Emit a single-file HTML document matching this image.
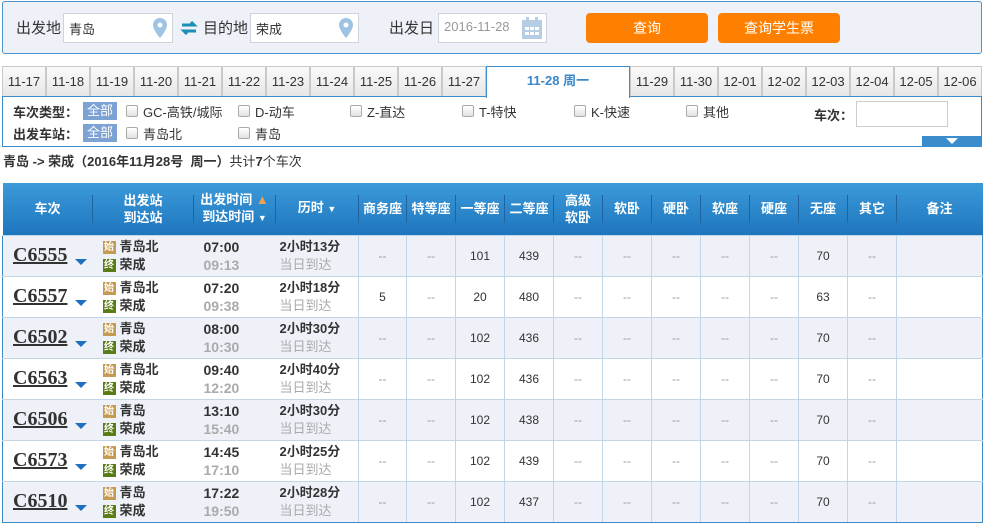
<!DOCTYPE html>
<html><head><meta charset="utf-8"><style>
*{margin:0;padding:0;box-sizing:border-box}
body{width:985px;height:530px;background:#fff;font-family:"Liberation Sans","Noto Sans CJK SC",sans-serif;font-size:13px;color:#333;position:relative;overflow:hidden}
.a{position:absolute}
.top{left:2px;top:1px;width:980px;height:53px;background:#eef1f8;border:1px solid #4b93cc;border-radius:3px}
.lbl{font-size:15px;color:#333;top:17px}
.inp{background:#fff;border:1px solid #cfd4dc;height:30px;top:13px;font-size:13px;padding:5px 0 0 5px}
.pin{position:absolute;right:5px;top:4px;width:14px;height:20px}
.btn{background:#ff8000;color:#fff;font-size:14px;text-align:center;line-height:30px;border-radius:4px;top:13px;width:122px;height:30px}
.tab{top:66px;height:31px;width:44px;background:linear-gradient(#fafafa,#e6e6e6);border:1px solid #c9c9c9;border-bottom:none;font-size:13px;text-align:center;line-height:30px;color:#333}
.filter{left:2px;top:96px;width:980px;height:51px;border:1px solid #3f8bc8;border-top:1px solid #3f8bc8}
.fl{font-weight:bold;font-size:13px}
.all{background:#7ca1d3;color:#fff;padding:0 4px;font-size:13px;line-height:18px;height:18px}
.cb{width:12px;height:12px;border:1px solid #aaa;border-radius:2px;background:linear-gradient(#fff,#e2e2e2)}
.ft{font-size:13px}
table{position:absolute;left:2px;top:183px;width:980px;border-collapse:collapse;table-layout:fixed}
th{height:52px;background:linear-gradient(#3c9ad9,#1e76be);color:#fff;font-size:13px;font-weight:bold;line-height:17px;position:relative}
th:after{content:"";position:absolute;right:0;top:12px;height:28px;border-right:1px solid #1f64a0}
th:last-child:after{display:none}
td{height:41px;border:1px solid #c3d6e6;text-align:center;font-size:12px;color:#333}
tr.o td{background:#eef1f8}
td.dd{color:#999}
td.tn{text-align:left;padding-left:10px;border-right:none;border-left:1px solid #3f8bc8}
td.st{text-align:left;padding-left:10px;border-left:none;border-right:none}
td.tm{border-left:none;border-right:none;text-align:left;padding-left:10px}
td.du{border-left:none;text-align:left;padding-left:4px}
td:last-child{border-right:1px solid #3f8bc8}
tr:last-child td{border-bottom:1px solid #3f8bc8}
.num{font-family:"Liberation Serif",serif;font-weight:bold;font-size:20px;color:#333;text-decoration:underline}
.arr{display:inline-block;width:0;height:0;border-left:6px solid transparent;border-right:6px solid transparent;border-top:6px solid #1f6fc0;margin-left:8px;vertical-align:-4px}
.ic{display:inline-block;width:13px;height:13px;font-size:10px;line-height:13px;text-align:center;color:#fff;vertical-align:1px;margin-right:4px}
.s{background:#c59a52}.e{background:#5a7c16}
.stn{font-weight:bold;font-size:13px;line-height:18px}
.t1{font-weight:bold;font-size:14px;line-height:18px;font-family:"Liberation Sans",sans-serif}
.t2{font-weight:bold;font-size:14px;line-height:18px;color:#aaa}
.d1{font-weight:bold;font-size:13px;line-height:18px}
.d2{color:#aaa;font-size:13px;line-height:18px}
</style></head><body>
<div class="a top"></div>
<div class="a lbl" style="left:16px">出发地</div>
<div class="a inp" style="left:63px;width:110px">青岛<svg class="pin" viewBox="0 0 14 20"><path d="M7 0C3 0 0 3 0 7c0 5 7 13 7 13s7-8 7-13C14 3 11 0 7 0z" fill="#9fc3e2"/><circle cx="7" cy="7" r="2.5" fill="#fff"/></svg></div>
<svg class="a" style="left:180px;top:21px" width="18" height="14" viewBox="0 0 18 14"><path d="M2 4h12l-3-3M16 10H4l3 3" stroke="#1a8fb8" stroke-width="3" fill="none"/></svg>
<div class="a lbl" style="left:203px">目的地</div>
<div class="a inp" style="left:250px;width:109px">荣成<svg class="pin" viewBox="0 0 14 20"><path d="M7 0C3 0 0 3 0 7c0 5 7 13 7 13s7-8 7-13C14 3 11 0 7 0z" fill="#9fc3e2"/><circle cx="7" cy="7" r="2.5" fill="#fff"/></svg></div>
<div class="a lbl" style="left:389px">出发日</div>
<div class="a inp" style="left:438px;width:109px;color:#999">2016-11-28<svg class="a" style="right:4px;top:3px" width="20" height="22" viewBox="0 0 20 22"><rect x="0" y="3" width="20" height="19" fill="#b5cde5"/><rect x="4" y="0" width="3" height="5" fill="#b5cde5"/><rect x="13" y="0" width="3" height="5" fill="#b5cde5"/><g fill="#fff"><rect x="3" y="10" width="4" height="3"/><rect x="8" y="10" width="4" height="3"/><rect x="13" y="10" width="4" height="3"/><rect x="3" y="15" width="4" height="3"/><rect x="8" y="15" width="4" height="3"/><rect x="13" y="15" width="4" height="3"/></g></svg></div>
<div class="a btn" style="left:586px">查询</div>
<div class="a btn" style="left:718px">查询学生票</div>

<div class="a tab" style="left:2px">11-17</div><div class="a tab" style="left:46px">11-18</div><div class="a tab" style="left:90px">11-19</div><div class="a tab" style="left:134px">11-20</div><div class="a tab" style="left:178px">11-21</div><div class="a tab" style="left:222px">11-22</div><div class="a tab" style="left:266px">11-23</div><div class="a tab" style="left:310px">11-24</div><div class="a tab" style="left:354px">11-25</div><div class="a tab" style="left:398px">11-26</div><div class="a tab" style="left:442px">11-27</div>
<div class="a" style="left:486px;top:66px;width:144px;height:31px;background:#fff;border:1px solid #3f8bc8;border-bottom:none;color:#3a86c8;font-weight:bold;text-align:center;line-height:28px;z-index:2">11-28 周一</div>
<div class="a tab" style="left:630px">11-29</div><div class="a tab" style="left:674px">11-30</div><div class="a tab" style="left:718px">12-01</div><div class="a tab" style="left:762px">12-02</div><div class="a tab" style="left:806px">12-03</div><div class="a tab" style="left:850px">12-04</div><div class="a tab" style="left:894px">12-05</div><div class="a tab" style="left:938px;width:44px">12-06</div>

<div class="a filter"></div>
<div class="a" style="left:486px;top:96px;width:144px;height:2px;background:#fff;z-index:3;border-left:1px solid #3f8bc8;border-right:1px solid #3f8bc8"></div>
<div class="a fl" style="left:13px;top:102px">车次类型：</div><div class="a all" style="left:83px;top:102px">全部</div>
<div class="a cb" style="left:126px;top:105px"></div><div class="a ft" style="left:143px;top:102px">GC-高铁/城际</div>
<div class="a cb" style="left:238px;top:105px"></div><div class="a ft" style="left:255px;top:102px">D-动车</div>
<div class="a cb" style="left:350px;top:105px"></div><div class="a ft" style="left:367px;top:102px">Z-直达</div>
<div class="a cb" style="left:462px;top:105px"></div><div class="a ft" style="left:479px;top:102px">T-特快</div>
<div class="a cb" style="left:574px;top:105px"></div><div class="a ft" style="left:591px;top:102px">K-快速</div>
<div class="a cb" style="left:686px;top:105px"></div><div class="a ft" style="left:703px;top:102px">其他</div>
<div class="a fl" style="left:814px;top:105px">车次：</div>
<div class="a" style="left:856px;top:101px;width:92px;height:26px;border:1px solid #ccc;background:#fff"></div>
<div class="a fl" style="left:13px;top:124px">出发车站：</div><div class="a all" style="left:83px;top:124px">全部</div>
<div class="a cb" style="left:126px;top:127px"></div><div class="a ft" style="left:143px;top:124px">青岛北</div>
<div class="a cb" style="left:238px;top:127px"></div><div class="a ft" style="left:255px;top:124px">青岛</div>
<div class="a" style="left:922px;top:136px;width:60px;height:11px;background:#3a8ccc"></div>
<div class="a" style="left:946px;top:138px;width:0;height:0;border-left:6px solid transparent;border-right:6px solid transparent;border-top:6px solid #fff"></div>

<div class="a" style="left:3px;top:151px;font-size:13px"><b>青岛 -&gt; 荣成（2016年11月28号&nbsp; 周一）</b>共计<b>7</b>个车次</div>

<table>
<colgroup><col style="width:90px"><col style="width:101px"><col style="width:82px"><col style="width:83px"><col style="width:48px"><col style="width:49px"><col style="width:49px"><col style="width:49px"><col style="width:49px"><col style="width:49px"><col style="width:49px"><col style="width:49px"><col style="width:49px"><col style="width:49px"><col style="width:49px"><col style="width:86px"></colgroup>
<tr><th>车次</th><th>出发站<br>到达站</th><th>出发时间 <span style="color:#f0a050">▲</span><br>到达时间 <span style="font-size:9px">▼</span></th><th>历时 <span style="font-size:9px">▼</span></th><th>商务座</th><th>特等座</th><th>一等座</th><th>二等座</th><th>高级<br>软卧</th><th>软卧</th><th>硬卧</th><th>软座</th><th>硬座</th><th>无座</th><th>其它</th><th>备注</th></tr>
<tr class="o"><td class="tn"><span class="num">C6555</span><span class="arr"></span></td><td class="st"><div class="stn"><span class="ic s">始</span>青岛北</div><div class="stn"><span class="ic e">终</span>荣成</div></td><td class="tm"><div class="t1">07:00</div><div class="t2">09:13</div></td><td class="du"><div class="d1">2小时13分</div><div class="d2">当日到达</div></td><td class="dd">--</td><td class="dd">--</td><td>101</td><td>439</td><td class="dd">--</td><td class="dd">--</td><td class="dd">--</td><td class="dd">--</td><td class="dd">--</td><td>70</td><td class="dd">--</td><td></td></tr>
<tr><td class="tn"><span class="num">C6557</span><span class="arr"></span></td><td class="st"><div class="stn"><span class="ic s">始</span>青岛北</div><div class="stn"><span class="ic e">终</span>荣成</div></td><td class="tm"><div class="t1">07:20</div><div class="t2">09:38</div></td><td class="du"><div class="d1">2小时18分</div><div class="d2">当日到达</div></td><td>5</td><td class="dd">--</td><td>20</td><td>480</td><td class="dd">--</td><td class="dd">--</td><td class="dd">--</td><td class="dd">--</td><td class="dd">--</td><td>63</td><td class="dd">--</td><td></td></tr>
<tr class="o"><td class="tn"><span class="num">C6502</span><span class="arr"></span></td><td class="st"><div class="stn"><span class="ic s">始</span>青岛</div><div class="stn"><span class="ic e">终</span>荣成</div></td><td class="tm"><div class="t1">08:00</div><div class="t2">10:30</div></td><td class="du"><div class="d1">2小时30分</div><div class="d2">当日到达</div></td><td class="dd">--</td><td class="dd">--</td><td>102</td><td>436</td><td class="dd">--</td><td class="dd">--</td><td class="dd">--</td><td class="dd">--</td><td class="dd">--</td><td>70</td><td class="dd">--</td><td></td></tr>
<tr><td class="tn"><span class="num">C6563</span><span class="arr"></span></td><td class="st"><div class="stn"><span class="ic s">始</span>青岛北</div><div class="stn"><span class="ic e">终</span>荣成</div></td><td class="tm"><div class="t1">09:40</div><div class="t2">12:20</div></td><td class="du"><div class="d1">2小时40分</div><div class="d2">当日到达</div></td><td class="dd">--</td><td class="dd">--</td><td>102</td><td>436</td><td class="dd">--</td><td class="dd">--</td><td class="dd">--</td><td class="dd">--</td><td class="dd">--</td><td>70</td><td class="dd">--</td><td></td></tr>
<tr class="o"><td class="tn"><span class="num">C6506</span><span class="arr"></span></td><td class="st"><div class="stn"><span class="ic s">始</span>青岛</div><div class="stn"><span class="ic e">终</span>荣成</div></td><td class="tm"><div class="t1">13:10</div><div class="t2">15:40</div></td><td class="du"><div class="d1">2小时30分</div><div class="d2">当日到达</div></td><td class="dd">--</td><td class="dd">--</td><td>102</td><td>438</td><td class="dd">--</td><td class="dd">--</td><td class="dd">--</td><td class="dd">--</td><td class="dd">--</td><td>70</td><td class="dd">--</td><td></td></tr>
<tr><td class="tn"><span class="num">C6573</span><span class="arr"></span></td><td class="st"><div class="stn"><span class="ic s">始</span>青岛北</div><div class="stn"><span class="ic e">终</span>荣成</div></td><td class="tm"><div class="t1">14:45</div><div class="t2">17:10</div></td><td class="du"><div class="d1">2小时25分</div><div class="d2">当日到达</div></td><td class="dd">--</td><td class="dd">--</td><td>102</td><td>439</td><td class="dd">--</td><td class="dd">--</td><td class="dd">--</td><td class="dd">--</td><td class="dd">--</td><td>70</td><td class="dd">--</td><td></td></tr>
<tr class="o"><td class="tn"><span class="num">C6510</span><span class="arr"></span></td><td class="st"><div class="stn"><span class="ic s">始</span>青岛</div><div class="stn"><span class="ic e">终</span>荣成</div></td><td class="tm"><div class="t1">17:22</div><div class="t2">19:50</div></td><td class="du"><div class="d1">2小时28分</div><div class="d2">当日到达</div></td><td class="dd">--</td><td class="dd">--</td><td>102</td><td>437</td><td class="dd">--</td><td class="dd">--</td><td class="dd">--</td><td class="dd">--</td><td class="dd">--</td><td>70</td><td class="dd">--</td><td></td></tr>
</table>
</body></html>
